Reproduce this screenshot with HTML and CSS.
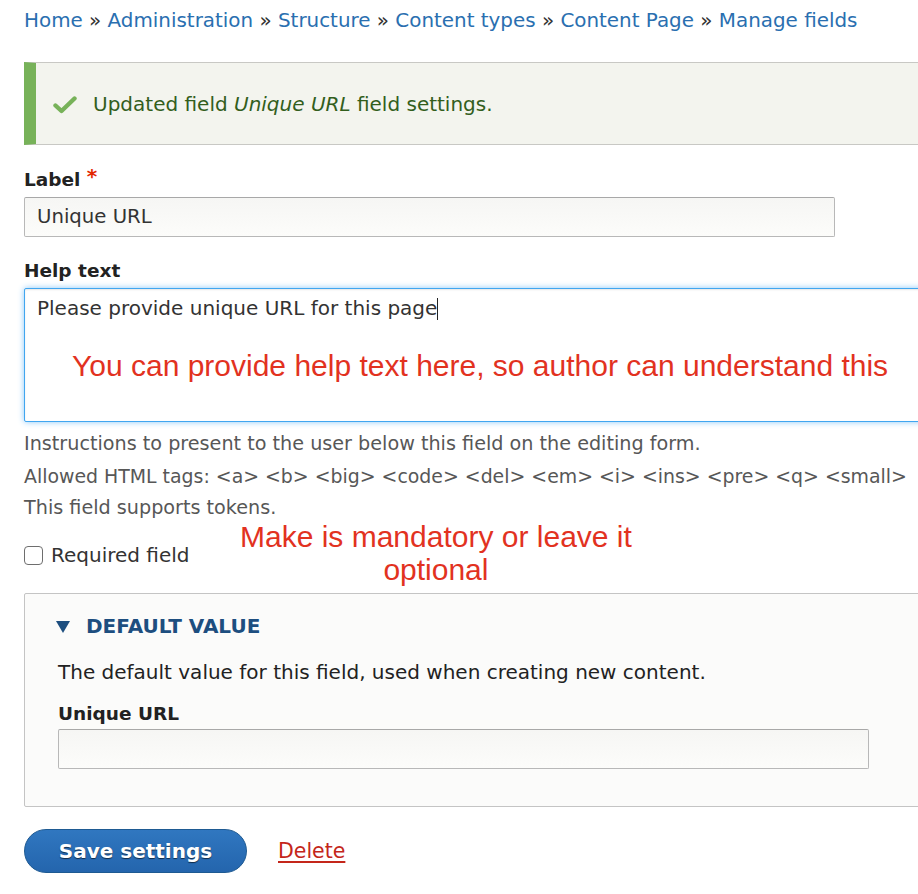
FILE: index.html
```html
<!DOCTYPE html>
<html lang="en">
<head>
<meta charset="utf-8">
<title>Unique URL settings</title>
<link rel="stylesheet" href="styles.css">
</head>
<body>
<div class="page">
  <nav class="breadcrumb">
    <a href="#">Home</a> » <a href="#">Administration</a> » <a href="#">Structure</a> » <a href="#">Content types</a> » <a href="#">Content Page</a> » <a href="#">Manage fields</a>
  </nav>

  <div class="message">
    <svg class="check" width="24" height="18" viewBox="0 0 24 18"><path d="M2.5 9.5 L8.5 15 L21.5 2.5" fill="none" stroke="#77b259" stroke-width="4.4" stroke-linecap="round" stroke-linejoin="round"/></svg>
    <span>Updated field <em>Unique URL</em> field settings.</span>
  </div>

  <form class="form">
    <div class="item">
      <label class="label">Label <span class="req">*</span></label>
      <div class="input">Unique URL</div>
    </div>

    <div class="item item-help">
      <label class="label">Help text</label>
      <div class="textarea">
        <span class="ta-text">Please provide unique URL for this page</span><span class="caret"></span>
        <div class="note note-help">You can provide help text here, so author can understand this</div>
      </div>
      <div class="desc">
        <div>Instructions to present to the user below this field on the editing form.</div>
        <div class="nowrap tags">Allowed HTML tags: &lt;a&gt; &lt;b&gt; &lt;big&gt; &lt;code&gt; &lt;del&gt; &lt;em&gt; &lt;i&gt; &lt;ins&gt; &lt;pre&gt; &lt;q&gt; &lt;small&gt;</div>
        <div>This field supports tokens.</div>
      </div>
    </div>

    <div class="check-row">
      <span class="checkbox"></span>
      <span class="check-label">Required field</span>
      <div class="note note-req">Make is mandatory or leave it<br>optional</div>
    </div>

    <div class="details">
      <div class="summary">
        <svg class="tri" width="14" height="12" viewBox="0 0 14 12"><path d="M0 0 H14 L7 12 Z" fill="#1d4e7f"/></svg>
        <span>DEFAULT VALUE</span>
      </div>
      <div class="details-desc">The default value for this field, used when creating new content.</div>
      <label class="label label-inner">Unique URL</label>
      <div class="input"></div>
    </div>

    <div class="actions">
      <button type="button" class="btn">Save settings</button>
      <a href="#" class="delete">Delete</a>
    </div>
  </form>
</div>
</body>
</html>
```

FILE: styles.css
```css
html, body {
  margin: 0;
  padding: 0;
  overflow: hidden;
  background: #fff;
}
body {
  font-family: "DejaVu Sans", "Lucida Grande", sans-serif;
  color: #333;
  font-size: 20px;
}
.page {
  width: 1100px;
  padding: 9px 0 0 24px;
}
.breadcrumb {
  font-size: 19.9px;
  line-height: 24px;
  height: 24px;
  color: #333;
  margin-bottom: 29px;
}
.breadcrumb a {
  color: #2a6fb0;
  text-decoration: none;
}
.message {
  display: flex;
  align-items: center;
  height: 81px;
  border: 1px solid #c8c8c4;
  border-left: 12px solid #77b259;
  border-right: 0;
  background: #f3f4ee;
  color: #325e1c;
  padding-left: 17px;
  font-size: 20px;
  line-height: 24px;
}
.message .check {
  margin-right: 16px;
  margin-top: 2px;
}
.message em {
  font-style: italic;
}
.form {
  margin: 0;
}
.item {
  margin-top: 22px;
}
.label {
  display: block;
  font-weight: bold;
  font-size: 18.5px;
  line-height: 24px;
  color: #222;
  margin-bottom: 5px;
}
.req {
  color: #e32700;
  font-size: 20px;
  position: relative;
  top: -3px;
}
.input {
  box-sizing: border-box;
  width: 811px;
  height: 40px;
  border: 1px solid #b8b8b8;
  border-top-color: #a8a8a8;
  border-radius: 2px;
  background: linear-gradient(#f6f6f4, #fcfcfa);
  padding: 0 12px;
  font-size: 19.7px;
  line-height: 38px;
  color: #333;
}
.textarea {
  position: relative;
  box-sizing: border-box;
  width: 1000px;
  height: 134px;
  border: 1px solid #40a6f0;
  border-radius: 2px;
  box-shadow: 0 0 6px #8cc8f8, inset 0 1px 2px rgba(0,0,0,0.1);
  background: #fff;
  padding: 7px 12px;
  font-size: 20px;
  line-height: 24px;
  color: #333;
}
.caret {
  display: inline-block;
  width: 1px;
  height: 22px;
  background: #222;
  vertical-align: -5px;
}
.note {
  position: absolute;
  font-family: "Liberation Sans", Arial, sans-serif;
  font-size: 30px;
  color: #e2321f;
  white-space: nowrap;
}
.note-help {
  left: 47px;
  top: 60px;
  line-height: 34px;
}
.desc {
  margin-top: 6px;
  font-size: 19.2px;
  line-height: 32px;
  color: #575757;
}
.nowrap {
  white-space: nowrap;
}
.tags {
  font-size: 18.9px;
}
.check-row {
  position: relative;
  display: flex;
  align-items: center;
  margin-top: 19px;
  height: 24px;
}
.checkbox {
  box-sizing: border-box;
  width: 19px;
  height: 19px;
  border: 1.5px solid #6e6e6e;
  border-radius: 4px;
  background: #fff;
  margin-right: 8px;
}
.check-label {
  font-size: 20px;
  line-height: 24px;
  color: #333;
}
.note-req {
  left: 216px;
  top: -23px;
  line-height: 33px;
  text-align: center;
}
.details {
  margin-top: 26px;
  box-sizing: border-box;
  width: 1000px;
  border: 1px solid #c4c4c4;
  border-radius: 2px;
  background: #fbfbfa;
  padding: 20px 0 37px 33px;
}
.summary {
  display: flex;
  align-items: center;
  height: 24px;
  margin-left: -2px;
  font-weight: bold;
  font-size: 20px;
  color: #1d4e7f;
}
.summary .tri {
  margin-right: 16px;
  margin-top: 2px;
}
.details-desc {
  margin-top: 22px;
  font-size: 20px;
  line-height: 24px;
  color: #222;
}
.label-inner {
  margin-top: 18px;
  margin-bottom: 3px;
}
.actions {
  display: flex;
  align-items: center;
  margin-top: 22px;
}
.btn {
  box-sizing: border-box;
  width: 223px;
  height: 44px;
  border: 1px solid #1e5a92;
  border-radius: 22px;
  background: linear-gradient(#3077c0, #2465ad);
  color: #fff;
  font-family: "DejaVu Sans", sans-serif;
  font-weight: bold;
  font-size: 20px;
  text-shadow: 0 1px 1px rgba(0,0,0,0.6);
  padding: 0;
  cursor: pointer;
}
.delete {
  margin-left: 31px;
  color: #c4261a;
  font-size: 20.5px;
  text-decoration: underline;
  text-underline-offset: 3px;
}
```
